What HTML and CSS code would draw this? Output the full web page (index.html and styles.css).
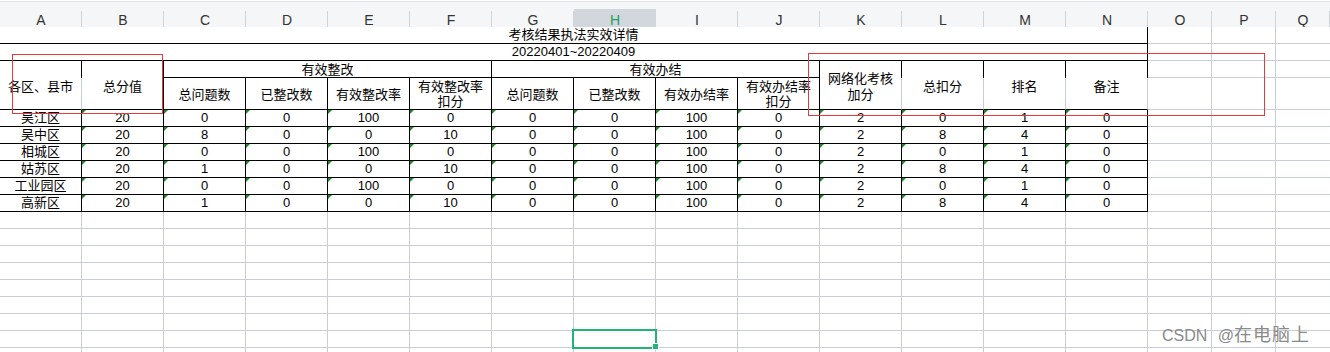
FILE: index.html
```html
<!DOCTYPE html>
<html lang="zh-CN">
<head>
<meta charset="utf-8">
<title>考核结果执法实效详情</title>
<link rel="stylesheet" href="styles.css">
</head>
<body>
<div class="app">
  <div class="topbar"></div>
  <div class="colheads">
    <div class="ch">A</div><div class="ch">B</div><div class="ch">C</div><div class="ch">D</div>
    <div class="ch">E</div><div class="ch">F</div><div class="ch">G</div><div class="ch active">H</div>
    <div class="ch">I</div><div class="ch">J</div><div class="ch">K</div><div class="ch">L</div>
    <div class="ch">M</div><div class="ch">N</div><div class="ch">O</div><div class="ch">P</div>
    <div class="ch">Q</div>
  </div>
  <div class="sheet">
    <div class="tbl">
      <div class="c14">考核结果执法实效详情</div>
      <div class="c14">20220401~20220409</div>

      <div class="r2 part">各区、县市</div>
      <div class="r2">总分值</div>
      <div class="c4">有效整改</div>
      <div class="c4">有效办结</div>
      <div class="r2 part"><span class="wrap16">网络化考核<br>加分</span></div>
      <div class="r2 part">总扣分</div>
      <div class="r2 part">排名</div>
      <div class="r2 part">备注</div>

      <div class="sub">总问题数</div>
      <div class="sub">已整改数</div>
      <div class="sub">有效整改率</div>
      <div class="sub"><span>有效整改率<br>扣分</span></div>
      <div class="sub">总问题数</div>
      <div class="sub">已整改数</div>
      <div class="sub">有效办结率</div>
      <div class="sub"><span>有效办结率<br>扣分</span></div>

      <div class="d a">吴江区</div><div class="d">20</div><div class="d">0</div><div class="d">0</div><div class="d">100</div><div class="d">0</div><div class="d">0</div><div class="d">0</div><div class="d">100</div><div class="d">0</div><div class="d">2</div><div class="d">0</div><div class="d">1</div><div class="d">0</div>
      <div class="d a">吴中区</div><div class="d">20</div><div class="d">8</div><div class="d">0</div><div class="d">0</div><div class="d">10</div><div class="d">0</div><div class="d">0</div><div class="d">100</div><div class="d">0</div><div class="d">2</div><div class="d">8</div><div class="d">4</div><div class="d">0</div>
      <div class="d a">相城区</div><div class="d">20</div><div class="d">0</div><div class="d">0</div><div class="d">100</div><div class="d">0</div><div class="d">0</div><div class="d">0</div><div class="d">100</div><div class="d">0</div><div class="d">2</div><div class="d">0</div><div class="d">1</div><div class="d">0</div>
      <div class="d a">姑苏区</div><div class="d">20</div><div class="d">1</div><div class="d">0</div><div class="d">0</div><div class="d">10</div><div class="d">0</div><div class="d">0</div><div class="d">100</div><div class="d">0</div><div class="d">2</div><div class="d">8</div><div class="d">4</div><div class="d">0</div>
      <div class="d a">工业园区</div><div class="d">20</div><div class="d">0</div><div class="d">0</div><div class="d">100</div><div class="d">0</div><div class="d">0</div><div class="d">0</div><div class="d">100</div><div class="d">0</div><div class="d">2</div><div class="d">0</div><div class="d">1</div><div class="d">0</div>
      <div class="d a">高新区</div><div class="d">20</div><div class="d">1</div><div class="d">0</div><div class="d">0</div><div class="d">10</div><div class="d">0</div><div class="d">0</div><div class="d">100</div><div class="d">0</div><div class="d">2</div><div class="d">8</div><div class="d">4</div><div class="d">0</div>
    </div>
  </div>

  <div class="selection"><span class="handle"></span></div>
  <div class="mark mark-left"></div>
  <div class="mark mark-right"></div>
  <div class="watermark">CSDN @<span class="wm-cjk">在电脑上</span></div>
</div>
</body>
</html>
```
FILE: styles.css
```css
* {
  box-sizing: border-box;
  margin: 0;
  padding: 0;
}

html,
body {
  width: 1330px;
  height: 352px;
  overflow: hidden;
  background: #fff;
}

body {
  font-family: "Liberation Sans", "Noto Sans CJK SC", sans-serif;
  font-size: 13px;
  color: #000;
}

.app {
  position: relative;
  display: flex;
  flex-direction: column;
  height: 352px;
}

/* thin strip above the column letters */
.topbar {
  height: 8px;
  margin-top: 1px;
  background: #f5f6f7;
  border-top: 1px solid #dfe2e6;
}

/* column letters */
.colheads {
  display: grid;
  grid-template-columns: repeat(14, 82px) 64px 64px 1fr;
  height: 18px;
}

.ch {
  display: flex;
  align-items: center;
  justify-content: center;
  padding-top: 1px;
  font-size: 14px;
  color: #333;
  border-bottom: 1px solid #a9b1c2;
  background: linear-gradient(#cfd3da, #cfd3da) right 0 top 2px / 1px 100% no-repeat, #f5f6f7;
}

.ch.active {
  padding-top: 3px;
  color: #1e9e62;
  background: #d2d6dd;
  border-bottom: 3px solid #21b573;
}

/* sheet with gridlines */
.sheet {
  --grid: #c8cdd7;
  flex: 1;
  background:
    repeating-linear-gradient(to bottom, transparent 0 16px, var(--grid) 16px 17px) 0 0 / 100% 51px no-repeat,
    linear-gradient(var(--grid), var(--grid)) 0 82px / 100% 1px no-repeat,
    repeating-linear-gradient(to bottom, transparent 0 16px, var(--grid) 16px 17px) 0 83px / 100% 1000px no-repeat,
    repeating-linear-gradient(to right, transparent 0 81px, var(--grid) 81px 82px) 0 0 / 1148px 100% no-repeat,
    linear-gradient(var(--grid), var(--grid)) 1211px 0 / 1px 100% no-repeat,
    linear-gradient(var(--grid), var(--grid)) 1275px 0 / 1px 100% no-repeat,
    #fff;
}

.tbl {
  display: grid;
  width: 1148px;
  grid-template-columns: repeat(14, 82px);
  grid-template-rows: 17px 17px 17px 32px repeat(6, 17px);
}

.tbl > div {
  position: relative;
  display: flex;
  align-items: center;
  justify-content: center;
  text-align: center;
  line-height: 16px;
  white-space: nowrap;
  background: #fff;
  border-right: 1px solid #000;
  border-bottom: 1px solid #000;
}

.tbl > .c14 {
  grid-column: span 14;
}

.tbl > .c4 {
  grid-column: span 4;
  padding-top: 2px;
}

.tbl > .r2 {
  grid-row: span 2;
  padding-top: 3px;
}

/* merged header cell whose right border only covers its first row */
.tbl > .part {
  border-right-color: transparent;
  background:
    linear-gradient(#000, #000) right top / 1px 17px no-repeat border-box,
    #fff padding-box;
}

.tbl > .sub {
  line-height: 15px;
  padding-top: 1px;
}

.wrap16 {
  line-height: 16px;
}

/* number-stored-as-text marker */
.tbl > .d:not(.a)::before {
  content: "";
  position: absolute;
  left: 0;
  top: 0;
  border-top: 4px solid #1d8a22;
  border-right: 4px solid transparent;
}

/* active cell */
.selection {
  position: absolute;
  left: 572px;
  top: 329px;
  width: 85px;
  height: 20px;
  border: 2px solid #21b573;
}

.handle {
  position: absolute;
  right: -4px;
  bottom: -3px;
  width: 7px;
  height: 7px;
  background: #21b573;
  border: 1px solid #fff;
}

/* red annotation boxes */
.mark {
  position: absolute;
  border: 1px solid #e8393d;
}

.mark-left {
  left: 12px;
  top: 54px;
  width: 151px;
  height: 60px;
}

.mark-right {
  left: 808px;
  top: 53px;
  width: 457px;
  height: 63px;
}

.watermark {
  position: absolute;
  left: 1162px;
  top: 326px;
  font-size: 16px;
  line-height: 18px;
  word-spacing: 6px;
  color: #8a8a8a;
  white-space: nowrap;
}

.wm-cjk {
  font-size: 18px;
  letter-spacing: 1px;
  word-spacing: 0;
}
```
